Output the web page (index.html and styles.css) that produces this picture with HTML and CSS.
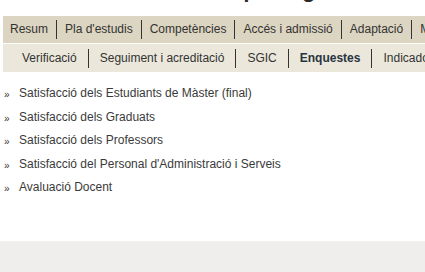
FILE: index.html
```
<!DOCTYPE html>
<html lang="ca">
<head>
<meta charset="utf-8">
<title>Enquestes</title>
<link rel="stylesheet" href="styles.css">
</head>
<body>
<div class="page">
  <div class="title-clip">
    <h1 class="title">Màster en Màrqueting</h1>
  </div>
  <nav class="tabs">
    <a class="tab first" href="#">Resum</a>
    <a class="tab" href="#">Pla d'estudis</a>
    <a class="tab" href="#">Competències</a>
    <a class="tab" href="#">Accés i admissió</a>
    <a class="tab" href="#">Adaptació</a>
    <a class="tab" href="#">Mobilitat</a>
  </nav>
  <nav class="subtabs">
    <a class="subtab first" href="#">Verificació</a>
    <a class="subtab" href="#">Seguiment i acreditació</a>
    <a class="subtab" href="#">SGIC</a>
    <a class="subtab active" href="#">Enquestes</a>
    <a class="subtab" href="#">Indicadors</a>
  </nav>
  <ul class="links">
    <li><span class="bullet">»</span><a href="#">Satisfacció dels Estudiants de Màster (final)</a></li>
    <li><span class="bullet">»</span><a href="#">Satisfacció dels Graduats</a></li>
    <li><span class="bullet">»</span><a href="#">Satisfacció dels Professors</a></li>
    <li><span class="bullet">»</span><a href="#">Satisfacció del Personal d'Administració i Serveis</a></li>
    <li><span class="bullet">»</span><a href="#">Avaluació Docent</a></li>
  </ul>
  <footer class="footer"></footer>
</div>
</body>
</html>
```
FILE: styles.css
```
html, body {
  margin: 0;
  padding: 0;
  background: #ffffff;
}
body {
  font-family: "Liberation Sans", Arial, sans-serif;
  font-size: 12px;
  color: #333333;
  overflow: hidden;
}
.page {
  width: 425px;
  height: 272px;
  overflow: hidden;
  display: flex;
  flex-direction: column;
}
.title-clip {
  height: 16px;
  overflow: hidden;
  flex: none;
}
.title {
  margin: -23px 0 0 88px;
  font-size: 22px;
  line-height: 26px;
  font-weight: bold;
  color: #2a2a2a;
  white-space: nowrap;
}
.tabs {
  margin-left: 3px;
  height: 27px;
  background: #dcd5c1;
  display: flex;
  align-items: center;
  white-space: nowrap;
  flex: none;
}
.tab {
  color: #333333;
  text-decoration: none;
  padding: 0 8px;
  line-height: 19px;
  border-left: 1px solid #333333;
}
.tab.first {
  border-left: none;
  padding-left: 7px;
}
.subtabs {
  margin-left: 3px;
  margin-top: 1px;
  height: 28px;
  background: #ebe8db;
  display: flex;
  align-items: center;
  white-space: nowrap;
  flex: none;
}
.subtab {
  color: #333333;
  text-decoration: none;
  padding: 0 11px;
  line-height: 19px;
  border-left: 1px solid #333333;
}
.subtab.first {
  border-left: none;
  padding-left: 19px;
}
.subtab.active {
  font-weight: bold;
  color: #283440;
}
.links {
  list-style: none;
  margin: 10px 0 0 0;
  padding: 0;
  flex: none;
}
.links li {
  line-height: 23.5px;
  padding-left: 4px;
  white-space: nowrap;
  display: flex;
}
.bullet {
  width: 15px;
  font-size: 10px;
  color: #333333;
  position: relative;
  top: 1px;
}
.links a {
  color: #3a3a3a;
  text-decoration: none;
}
.footer {
  margin-top: auto;
  height: 31px;
  background: #efeeec;
  flex: none;
}
```
